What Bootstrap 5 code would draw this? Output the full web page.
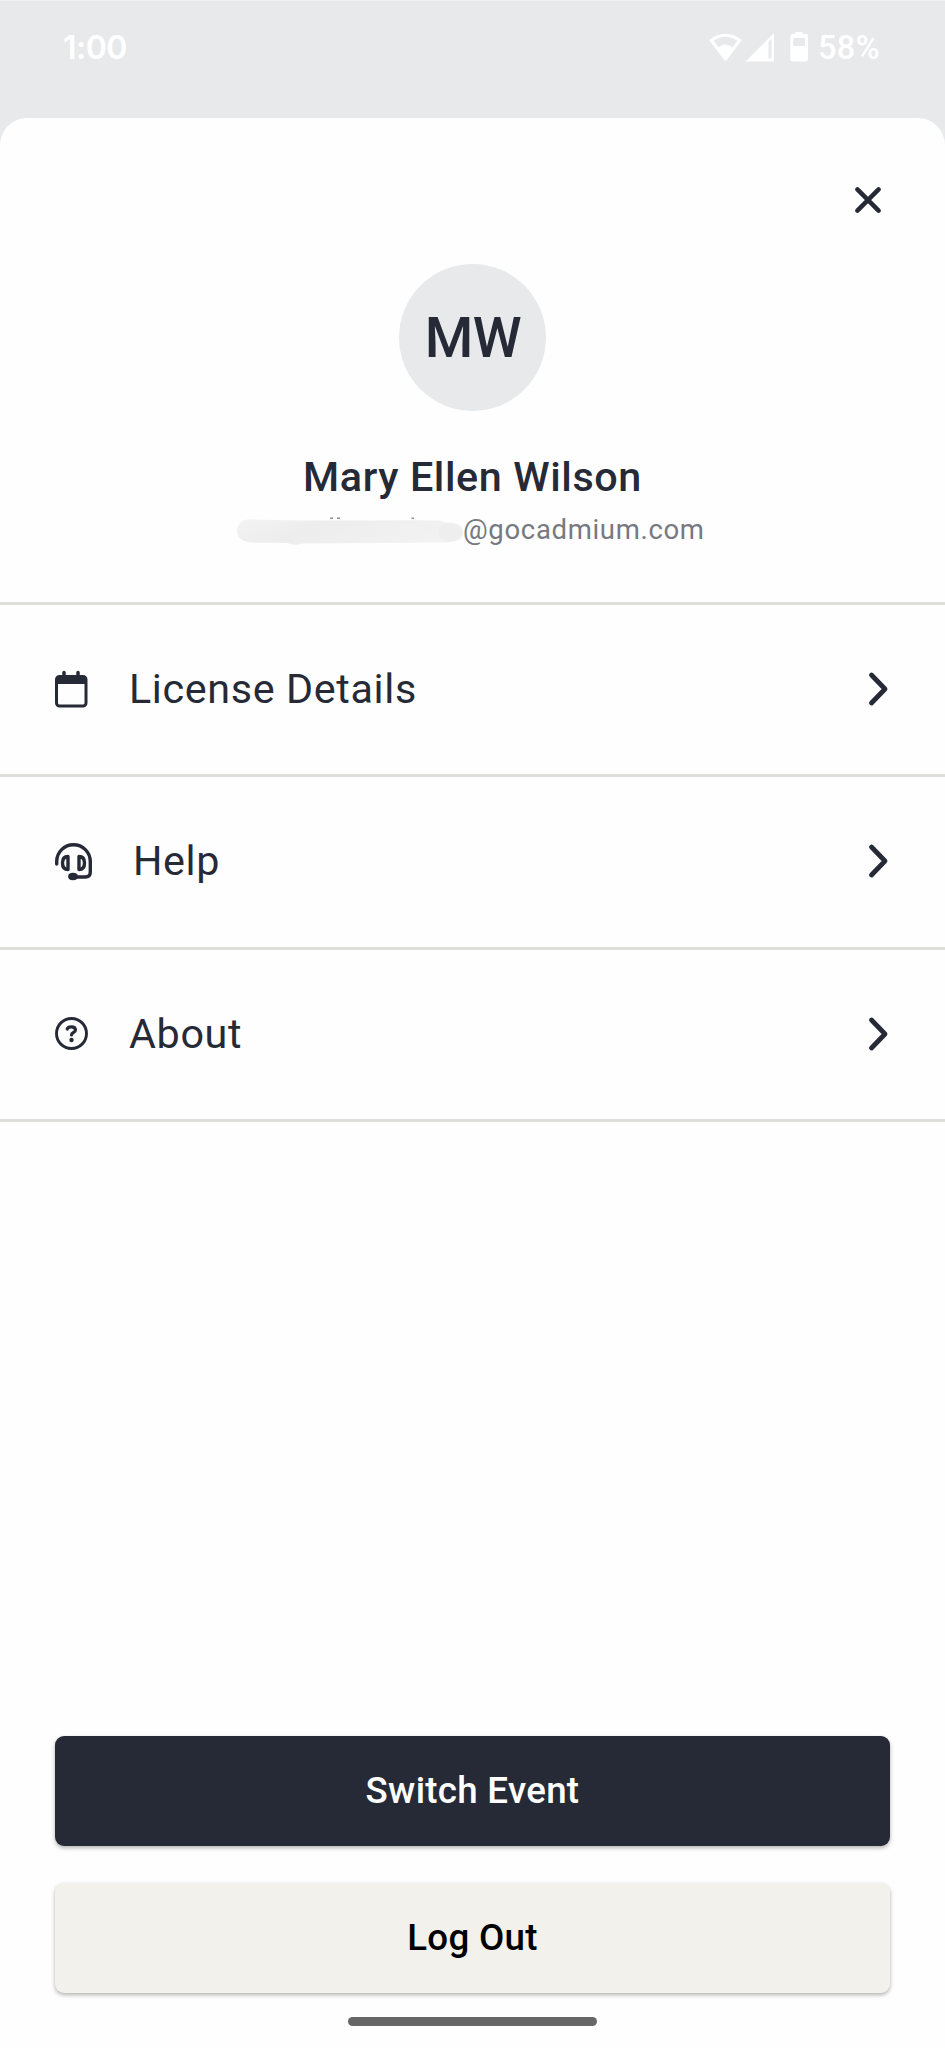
<!DOCTYPE html>
<html lang="en">
<head>
<meta charset="utf-8">
<meta name="viewport" content="width=device-width, initial-scale=1">
<title>Account</title>
<link href="https://cdn.jsdelivr.net/npm/bootstrap@5.3.0/dist/css/bootstrap.min.css" rel="stylesheet">
<style>
  :root { --ink: #262a37; --mist: #e8e9eb; }
  body { font-family: Roboto, "Liberation Sans", sans-serif; background: var(--mist); color: var(--ink); height: 2048px; overflow: hidden; }
  svg { display: block; flex: none; overflow: visible; }
  .status-strip { height: 117.5px; padding: 29px 65px 0 63px; border-top: 1px solid #f1f2f3; color: #fff; font: 600 32px/36px Inter, sans-serif; }
  .status-strip .clock { letter-spacing: -.5px; }
  .status-strip .pct { font: 500 32.5px/36px Roboto, sans-serif; letter-spacing: .4px; margin-left: 8px; }
  .sheet { background: #fefefe; border-radius: 27px 27px 0 0; }
  .sheet-head { height: 484.5px; }
  .close-x { padding: 0; border: 0; background: none; color: inherit; margin: 69px 64px 0 0; }
  .avatar { width: 147px; height: 147px; background: var(--mist); font-size: 55.5px; font-weight: 500; letter-spacing: -.4px; margin-top: 51.5px; padding-top: 2px; padding-left: 1px; }
  .who { font-size: 41.3px; line-height: 48px; font-weight: 500; letter-spacing: .6px; margin-top: 42px; }
  .mail { font-size: 27.5px; line-height: 32px; letter-spacing: .67px; color: #767981; margin-top: 13px; width: 471px; }
  .redacted { width: 226px; height: 25px; margin-top: 3px; }
  .menu-row { height: 172.3px; border-bottom: 3px solid #dededb; padding: 0 57px 0 55px; font-size: 41.3px; letter-spacing: .63px; }
  .menu-list { border-top: 3px solid #dededb; }
  .menu-row > svg { margin-bottom: 1px; }
  .menu-row .label { margin-left: 41px; padding-top: 1px; }
  .actions { padding: 0 55px; gap: 36.5px; margin-bottom: 23.5px; }
  .action-btn { height: 110.5px; border: 0; border-radius: 9px; font-size: 36.7px; font-weight: 500; letter-spacing: .3px; box-shadow: 0 2px 4px rgba(0,0,0,.3); --bs-btn-padding-y: 0; }
  .action-btn.switch { background: var(--ink); color: #fff; }
  .action-btn.logout { background: #f2f1ec; color: #000; }
  .home-bar { width: 249px; height: 9.5px; border-radius: 5px; background: #666; margin-bottom: 22px; }
</style>
</head>
<body class="d-flex flex-column">
  <header class="status-strip d-flex align-items-start flex-shrink-0">
    <span class="clock me-auto">1:00</span>
    <svg class="mt-1" width="102" height="30" viewBox="0 -1 102 30" fill="#fff">
      <path fill-rule="evenodd" d="M1 5Q17.500-7.500 34 5L17.500 26.500ZM5.600 5.800L10.500 12.200Q17.500 7 24.500 12.200L29.400 5.800Q17.500-2.500 5.600 5.800Z"/>
      <path fill-rule="evenodd" d="M66-2V26.500H37.500ZM60.500 6.500V23.500H63.500V3.500Z"/>
      <path fill-rule="evenodd" d="M87.500-3H94.500V-1H98Q100-1 100 1V24.500Q100 26.500 98 26.500H84.500Q82.300 26.500 82.300 24.500V1Q82.300-1 84.500-1H87.500ZM85.300 3V11H97V3Z"/>
    </svg>
    <span class="pct">58%</span>
  </header>

  <main class="sheet flex-grow-1 d-flex flex-column">
    <section class="sheet-head d-flex flex-column align-items-center">
      <button class="close-x align-self-end" aria-label="Close">
        <svg width="26" height="26" viewBox="0 0 26 26" fill="none" stroke="currentColor" stroke-width="4.600" stroke-linecap="round"><path d="M2.400 2.400 23.600 23.600M23.600 2.400 2.400 23.600"/></svg>
      </button>
      <div class="avatar rounded-circle d-flex align-items-center justify-content-center">MW</div>
      <div class="who text-nowrap">Mary Ellen Wilson</div>
      <div class="mail d-flex align-items-center text-nowrap">
        <svg class="redacted" viewBox="0 0 226 25">
          <defs><linearGradient id="smear" x1="0" y1="0" x2="1" y2=".3"><stop offset="0" stop-color="#f3f3f3"/><stop offset=".4" stop-color="#ededed"/><stop offset="1" stop-color="#f2f2f2"/></linearGradient></defs>
          <path d="M93-.7h3M100-.7h3M174.500-.7h2.500" stroke="#8d9096" stroke-width="1.600"/>
          <path d="M12 .3Q60 2 120 1.500T202 1.500Q208 4 216 4Q226 5 226 13T218 22Q212 24 202 23.500Q140 24 66 24.500Q58 27 50 24Q30 24 14 23.500Q0 22 0 12T12 .3Z" fill="url(#smear)"/>
          <ellipse cx="213" cy="13.500" rx="12" ry="9" fill="#eee"/>
        </svg>
        <span>@gocadmium.com</span>
      </div>
    </section>

    <nav class="menu-list d-flex flex-column">
      <div class="menu-row d-flex align-items-center">
        <svg width="33" height="37" viewBox="0 0 33 37" fill="none" stroke="currentColor" stroke-width="3"><rect x="1.500" y="5.500" width="29.500" height="29.500" rx="3"/><path d="M2 5H30.500V13H2Z" fill="currentColor" stroke="none"/><path d="M9 1.500V7M23 1.500V7" stroke-width="3.500" stroke-linecap="round"/></svg>
        <span class="label me-auto">License Details</span>
        <svg width="19" height="34" viewBox="0 0 19 34" fill="none" stroke="currentColor" stroke-width="4.800" stroke-linecap="round" stroke-linejoin="round"><path d="M2.500 3 16 17 2.500 31"/></svg>
      </div>
      <div class="menu-row d-flex align-items-center">
        <svg width="37" height="37" viewBox="0 0 37 37" fill="none" stroke="currentColor" stroke-width="3.400" stroke-linecap="round"><path d="M1.700 21V18.500A16.800 16.800 0 0 1 35.300 18.500V29Q35.300 34 30.300 34H19"/><path d="M13 13.500V26.500Q7.500 26.500 7.500 20T13 13.500ZM24 13.500V26.500Q29.500 26.500 29.500 20T24 13.500Z" stroke-linejoin="round"/><ellipse cx="18" cy="33.500" rx="3.200" ry="2" fill="currentColor"/></svg>
        <span class="label me-auto">Help</span>
        <svg width="19" height="34" viewBox="0 0 19 34" fill="none" stroke="currentColor" stroke-width="4.800" stroke-linecap="round" stroke-linejoin="round"><path d="M2.500 3 16 17 2.500 31"/></svg>
      </div>
      <div class="menu-row d-flex align-items-center">
        <svg width="33" height="33" viewBox="0 0 33 33" fill="none" stroke="currentColor" stroke-width="2.900"><circle cx="16.500" cy="16.500" r="15"/><path d="M12.200 12Q12.800 9.800 16.500 9.800T20.500 12.800Q20.500 14.500 18.500 15.500T16.500 18" stroke-width="3.200" stroke-linecap="round"/><circle cx="16.500" cy="23" r="2.200" fill="currentColor" stroke="none"/></svg>
        <span class="label me-auto">About</span>
        <svg width="19" height="34" viewBox="0 0 19 34" fill="none" stroke="currentColor" stroke-width="4.800" stroke-linecap="round" stroke-linejoin="round"><path d="M2.500 3 16 17 2.500 31"/></svg>
      </div>
    </nav>

    <div class="actions d-grid mt-auto">
      <button class="btn action-btn switch">Switch Event</button>
      <button class="btn action-btn logout">Log Out</button>
    </div>
    <div class="home-bar align-self-center flex-shrink-0"></div>
  </main>
<script src="https://cdn.jsdelivr.net/npm/bootstrap@5.3.0/dist/js/bootstrap.bundle.min.js"></script>
</body>
</html>
